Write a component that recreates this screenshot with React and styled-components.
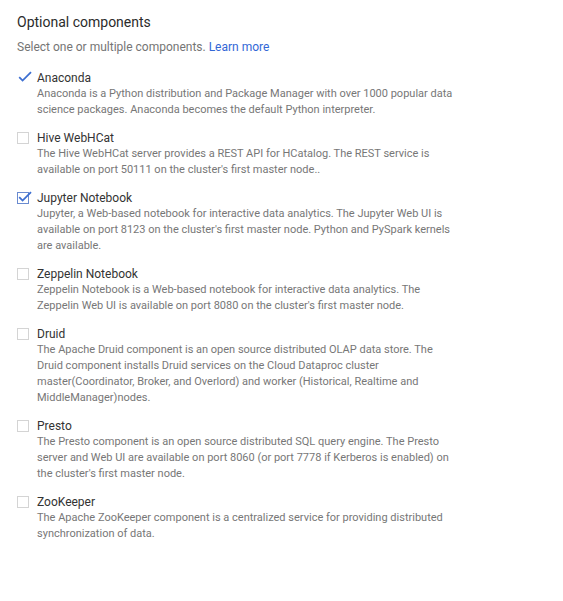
import React from "react";
import styled, { createGlobalStyle } from "styled-components";

const Global = createGlobalStyle`
  html, body { margin: 0; padding: 0; background: #fff; }
  body { font-family: Roboto, "Noto Sans", sans-serif; -webkit-font-smoothing: antialiased; }
`;

const Page = styled.div`
  width: 563px;
  min-height: 601px;
  box-sizing: border-box;
  padding: 12px 17px 0 17px;
`;

const Heading = styled.h2`
  margin: 0;
  font-size: 14px;
  font-weight: 400;
  line-height: 20px;
  color: #2b2b2b;
`;

const Subtitle = styled.p`
  margin: 7px 0 0 0;
  font-size: 12px;
  line-height: 16px;
  color: #757575;
`;

const Link = styled.a`
  color: #3367d6;
  text-decoration: none;
`;

const List = styled.div`
  display: flex;
  flex-direction: column;
  gap: 12px;
  margin-top: 15px;
`;

const Item = styled.label`
  display: grid;
  grid-template-columns: 20px 1fr;
  align-items: start;
`;

const Box = styled.span`
  width: 12px;
  height: 12px;
  margin-top: 2px;
  box-sizing: border-box;
  border: 1px solid ${(p) => (p.$bordered ? "#6a8bd0" : p.$checked ? "transparent" : "#d4d4d4")};
  position: relative;
  display: block;
`;

const Check = styled.svg`
  position: absolute;
  left: 0px;
  top: -3px;
  width: 14px;
  height: 13px;
  overflow: visible;
`;

const Body = styled.div`
  display: flex;
  flex-direction: column;
`;

const Title = styled.div`
  font-size: 12px;
  line-height: 16px;
  color: #333333;
`;

const Desc = styled.div`
  font-size: 11px;
  line-height: 16px;
  color: #777777;
  max-width: 420px;
`;

const items = [
  {
    title: "Anaconda",
    checked: true,
    bordered: false,
    desc: "Anaconda is a Python distribution and Package Manager with over 1000 popular data science packages. Anaconda becomes the default Python interpreter.",
  },
  {
    title: "Hive WebHCat",
    desc: "The Hive WebHCat server provides a REST API for HCatalog. The REST service is available on port 50111 on the cluster's first master node..",
  },
  {
    title: "Jupyter Notebook",
    checked: true,
    bordered: true,
    desc: "Jupyter, a Web-based notebook for interactive data analytics. The Jupyter Web UI is available on port 8123 on the cluster's first master node. Python and PySpark kernels are available.",
  },
  {
    title: "Zeppelin Notebook",
    desc: "Zeppelin Notebook is a Web-based notebook for interactive data analytics. The Zeppelin Web UI is available on port 8080 on the cluster's first master node.",
  },
  {
    title: "Druid",
    desc: "The Apache Druid component is an open source distributed OLAP data store. The Druid component installs Druid services on the Cloud Dataproc cluster master(Coordinator, Broker, and Overlord) and worker (Historical, Realtime and MiddleManager)nodes.",
  },
  {
    title: "Presto",
    desc: "The Presto component is an open source distributed SQL query engine. The Presto server and Web UI are available on port 8060 (or port 7778 if Kerberos is enabled) on the cluster's first master node.",
  },
  {
    title: "ZooKeeper",
    desc: "The Apache ZooKeeper component is a centralized service for providing distributed synchronization of data.",
  },
];

export default function App() {
  return (
    <>
      <Global />
      <Page>
        <Heading>Optional components</Heading>
        <Subtitle>
          Select one or multiple components. <Link href="#">Learn more</Link>
        </Subtitle>
        <List>
          {items.map((it) => (
            <Item key={it.title}>
              <Box $checked={it.checked} $bordered={it.bordered}>
                {it.checked && (
                  <Check viewBox="0 0 14 13">
                    <path d="M1.2 7.2 L4.6 10.6 L13 2.2" fill="none" stroke="#3d6fd1" strokeWidth="1.8" />
                  </Check>
                )}
              </Box>
              <Body>
                <Title>{it.title}</Title>
                <Desc>{it.desc}</Desc>
              </Body>
            </Item>
          ))}
        </List>
      </Page>
    </>
  );
}
